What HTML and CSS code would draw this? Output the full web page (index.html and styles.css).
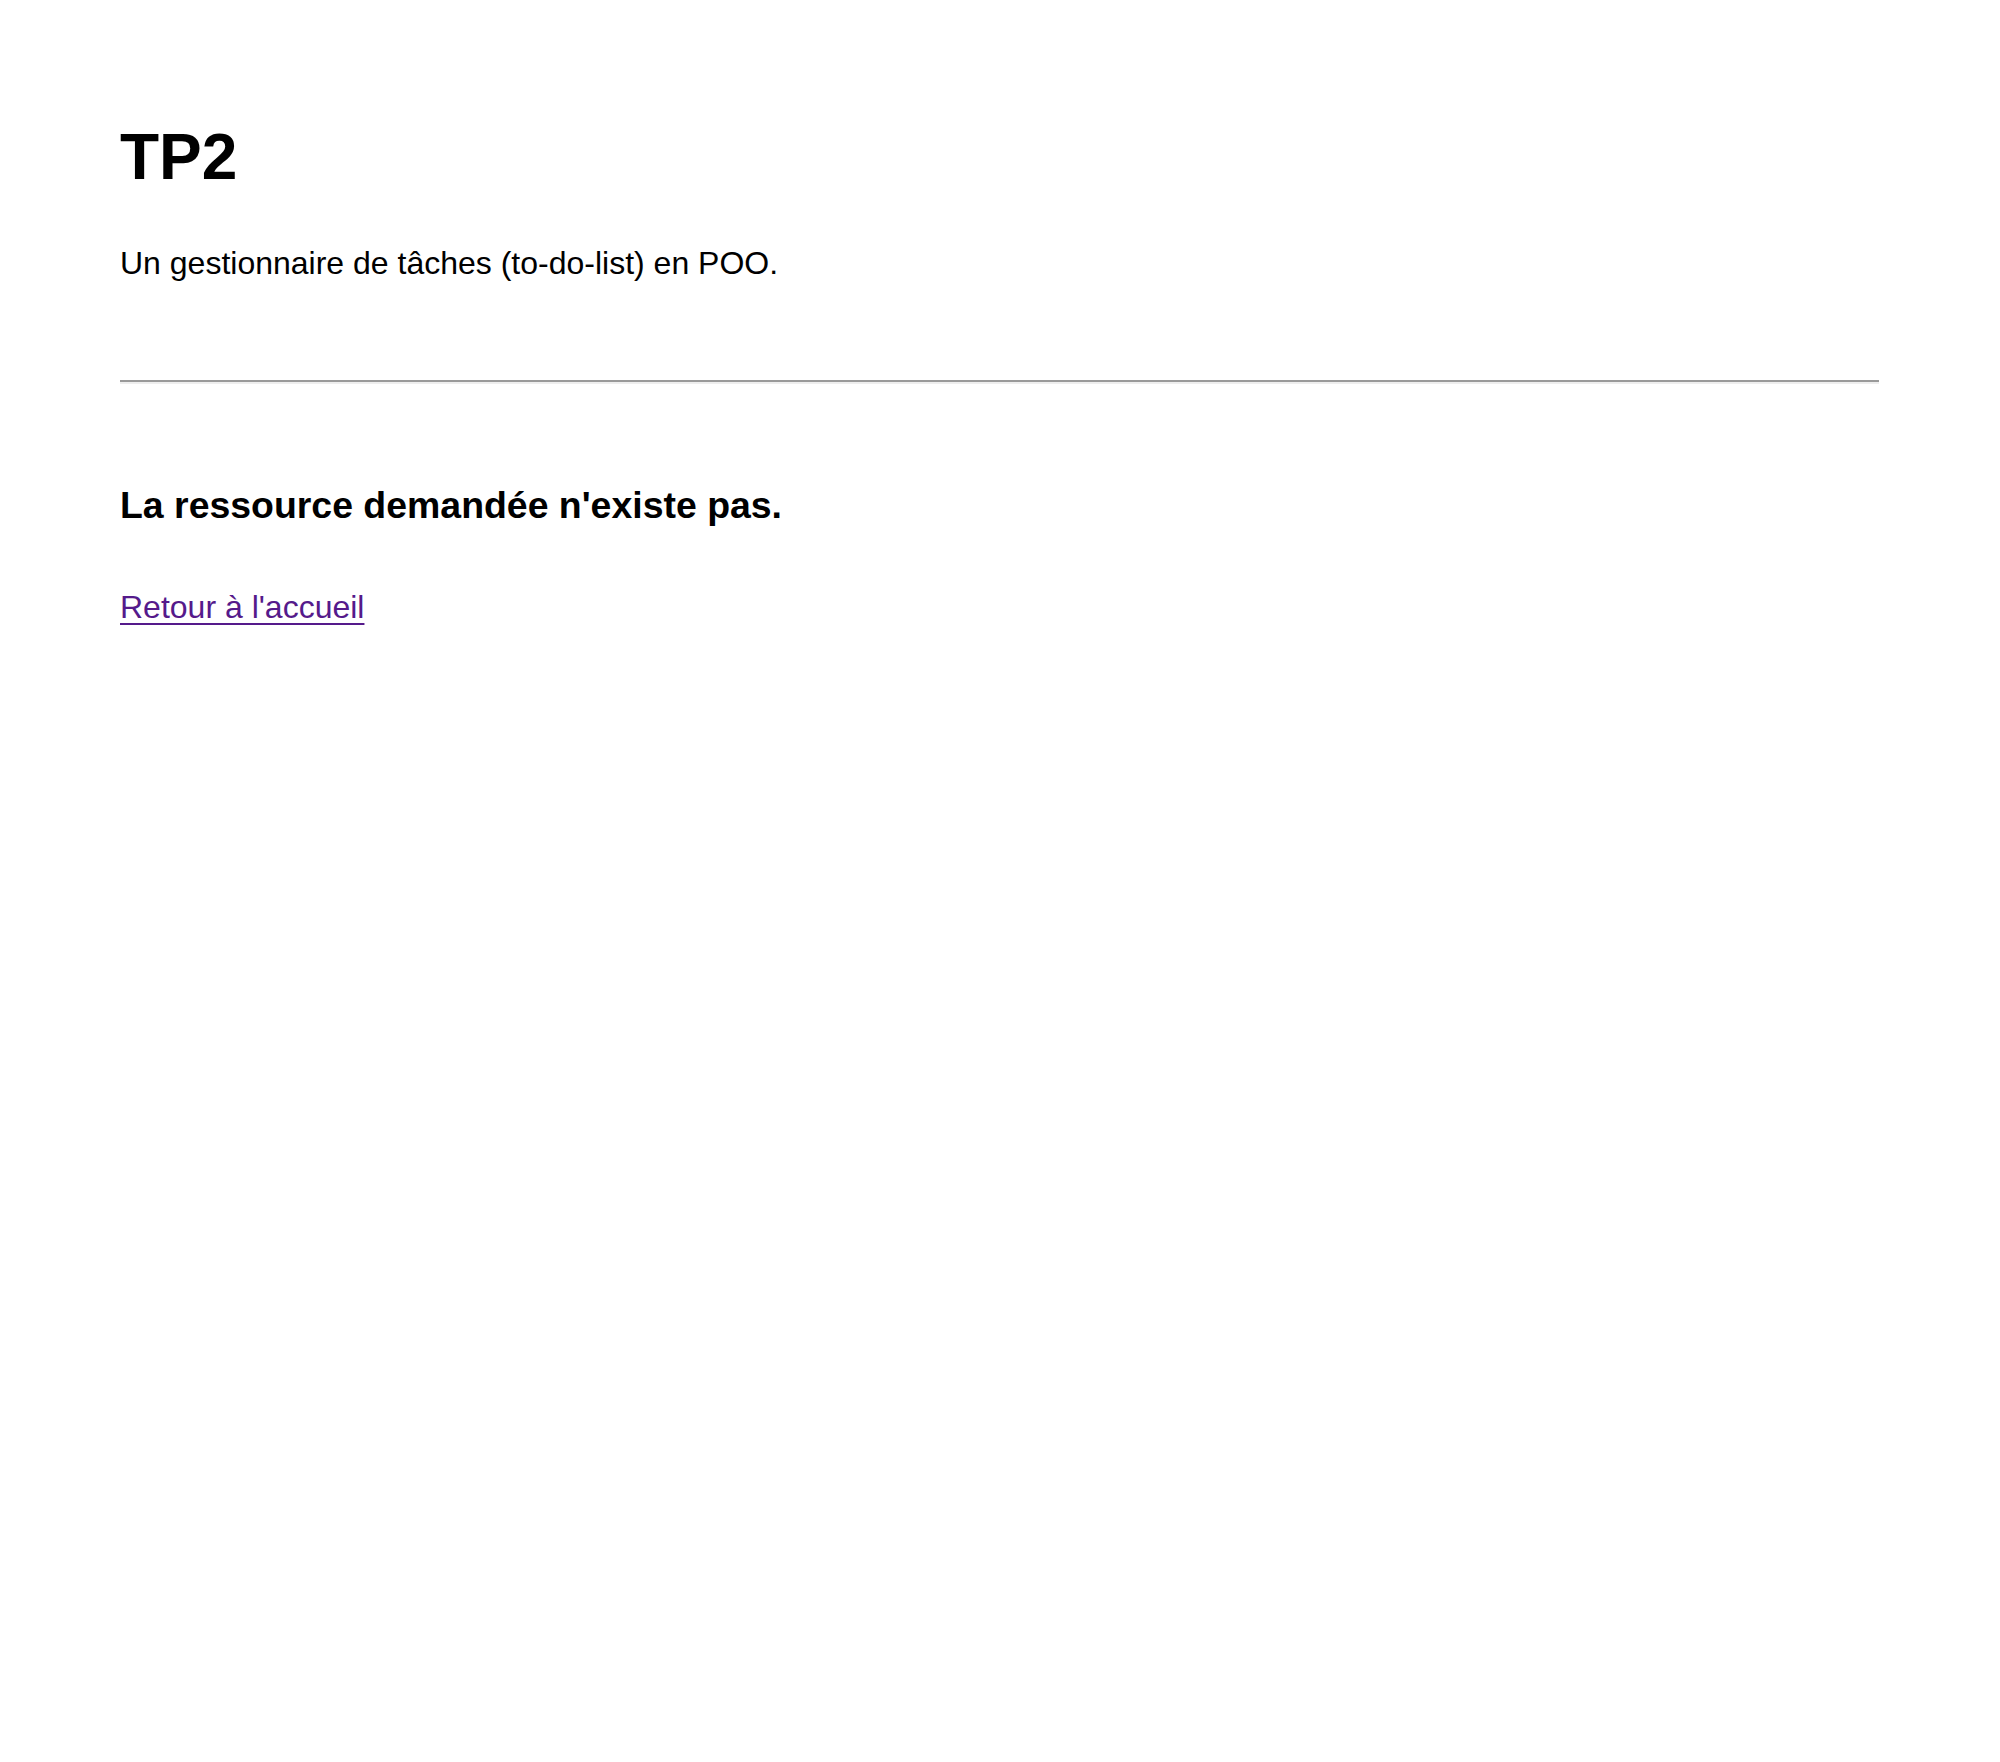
FILE: index.html
```html
<!DOCTYPE html>
<html lang="fr">
<head>
<meta charset="utf-8">
<title>TP2</title>
<link rel="stylesheet" href="styles.css">
</head>
<body>
<div class="page">
  <header class="header">
    <h1 class="title">TP2</h1>
    <p class="subtitle">Un gestionnaire de tâches (to-do-list) en POO.</p>
  </header>
  <hr class="sep">
  <main class="content">
    <h3 class="message">La ressource demandée n'existe pas.</h3>
    <p class="back"><a class="back-link" href="#">Retour à l'accueil</a></p>
  </main>
</div>
</body>
</html>
```
FILE: styles.css
```css
html, body {
  margin: 0;
  padding: 0;
  background: #ffffff;
}

body {
  font-family: "Liberation Sans", Arial, Helvetica, sans-serif;
  color: #000000;
  font-size: 32px;
}

.page {
  padding: 120px 121px 0 120px;
}

.header {
  display: flex;
  flex-direction: column;
}

.title {
  margin: 0;
  font-size: 64px;
  line-height: 74px;
  font-weight: bold;
}

.subtitle {
  margin: 51px 0 0 0;
  font-size: 32px;
  line-height: 37px;
}

.sep {
  margin: 98px 0 0 0;
  height: 0;
  border: none;
  border-top: 2px solid #9a9a9a;
  border-bottom: 2px solid #eeeeee;
}

.content {
  display: flex;
  flex-direction: column;
}

.message {
  margin: 100px 0 0 0;
  font-size: 37.44px;
  line-height: 43px;
  font-weight: bold;
}

.back {
  margin: 62px 0 0 0;
  font-size: 32px;
  line-height: 37px;
}

.back-link {
  color: #551a8b;
  text-decoration: underline;
  text-decoration-thickness: 2px;
  text-underline-offset: 5px;
}
```
